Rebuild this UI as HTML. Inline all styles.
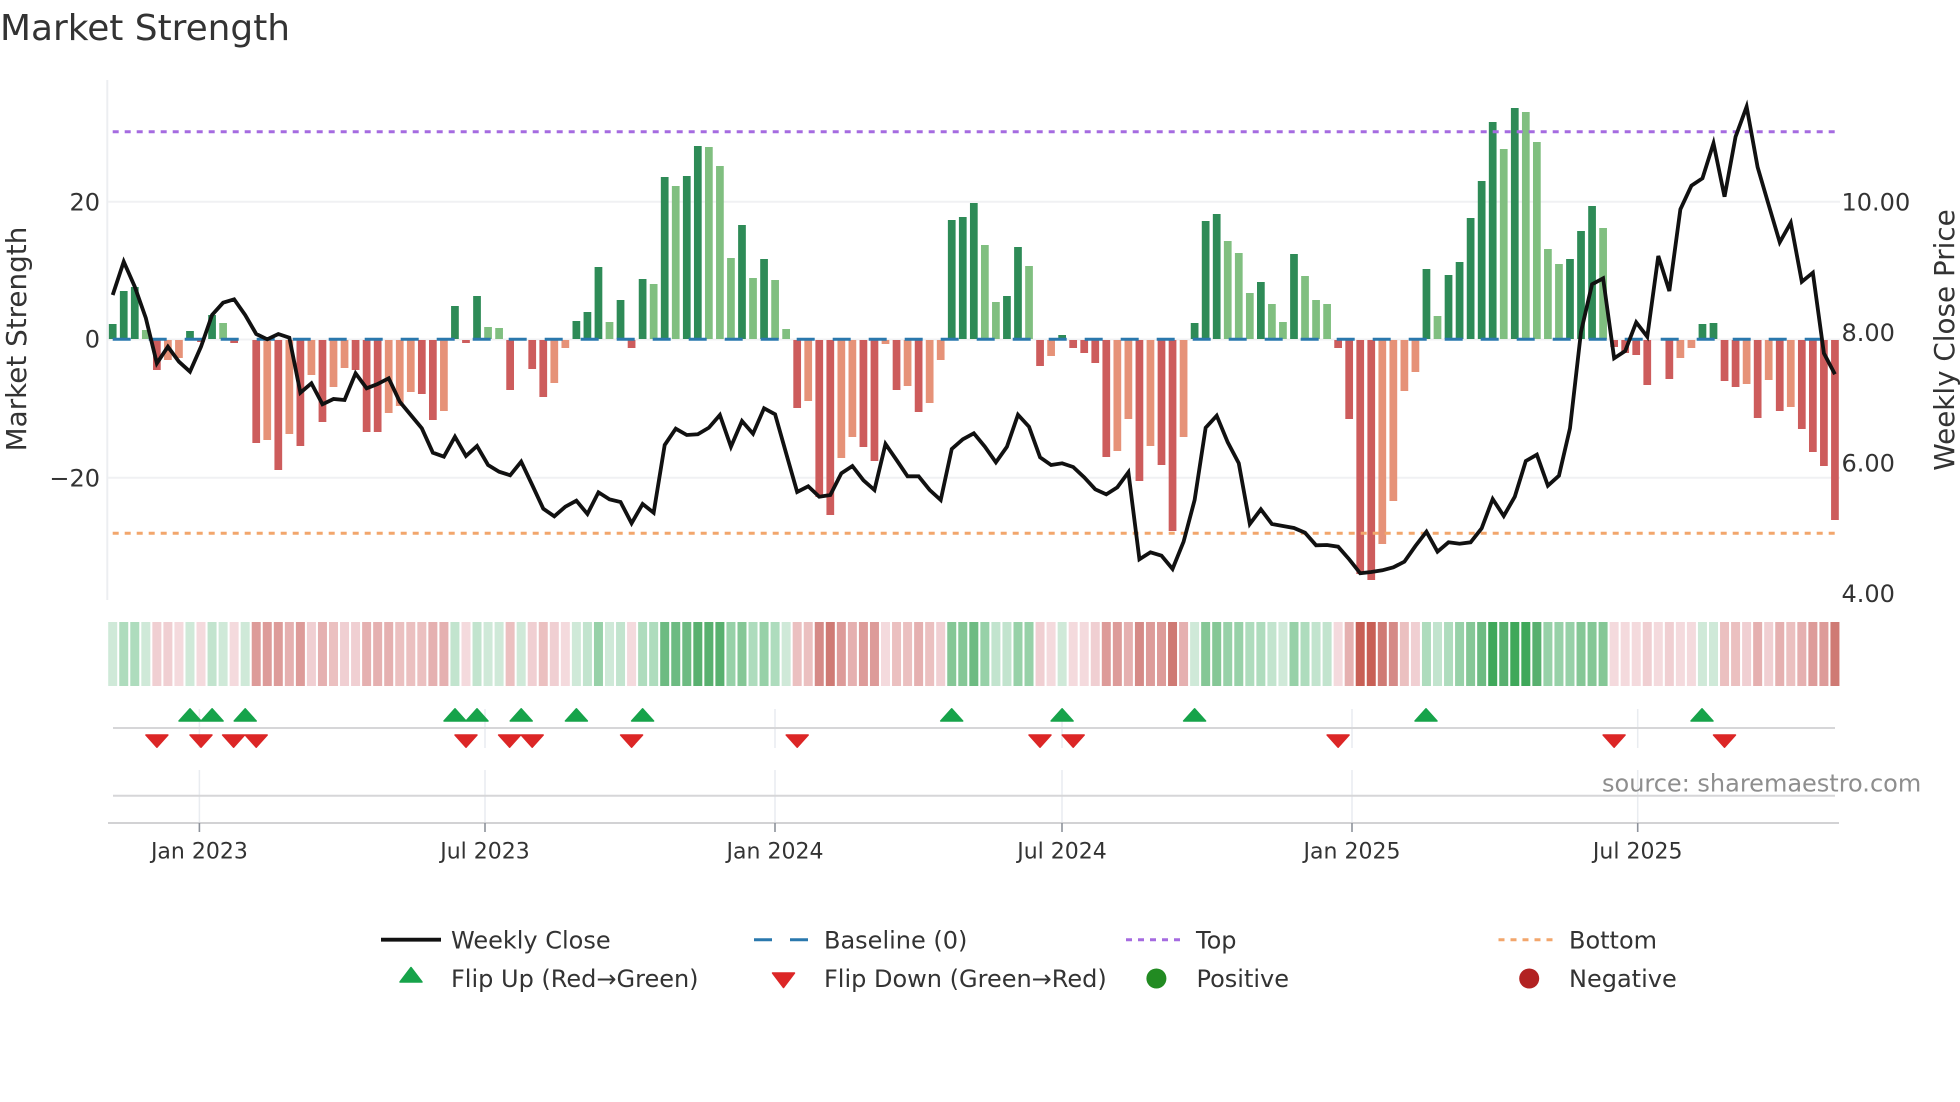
<!DOCTYPE html>
<html lang="en"><head><meta charset="utf-8"><title>Market Strength</title>
<style>
html,body{margin:0;padding:0;background:#fff;width:1960px;height:1102px;overflow:hidden}
svg{display:block}
text{font-family:"DejaVu Sans","Liberation Sans",sans-serif;fill:#333}
.t{font-size:24px}.x{font-size:22px}
.ns{vector-effect:non-scaling-stroke}
</style></head><body>
<svg width="1960" height="1102" viewBox="0 0 1960 1102" xmlns="http://www.w3.org/2000/svg">
<rect width="1960" height="1102" fill="#fff"/>
<text x="0" y="40" style="font-size:35.9px">Market Strength</text>

<!-- axis + grid -->
<path d="M107.3 80V600" stroke="#eceef1" stroke-width="2" fill="none"/>
<path d="M108 201.7H1840M108 339.5H1840M108 477.7H1840" stroke="#f0f1f3" stroke-width="2" fill="none"/>

<g transform="translate(112.7 0) scale(11.04 1)" fill="none">
<!-- bars -->
<path stroke="#2e8b57" stroke-width=".7" d="M0 339V324M1 339V291M2 339V287M7 339V331M9 339V315M31 339V306M33 339V296M42 339V321M43 339V312M44 339V267M46 339V300M48 339V279M50 339V177M52 339V176M53 339V146M57 339V225M59 339V259M76 339V220M77 339V217M78 339V203M81 339V296M82 339V247M86 339V335M98 339V323M99 339V221M100 339V214M104 339V282M107 339V254M119 339V269M121 339V275M122 339V262M123 339V218M124 339V181M125 339V122M127 339V108M132 339V259M133 339V231M134 339V206M144 339V324M145 339V323"/>
<path stroke="#80bf80" stroke-width=".7" d="M3 339V330M10 339V323M34 339V327M35 339V328M45 339V322M49 339V284M51 339V186M54 339V147M55 339V166M56 339V258M58 339V278M60 339V280M61 339V329M79 339V245M80 339V302M83 339V266M101 339V241M102 339V253M103 339V293M105 339V304M106 339V322M108 339V276M109 339V300M110 339V304M120 339V316M126 339V149M128 339V112M129 339V142M130 339V249M131 339V264M135 339V228"/>
<path stroke="#cd5c5c" stroke-width=".7" d="M4 340V370M8 340V342M11 340V343M13 340V443M15 340V470M17 340V446M19 340V422M22 340V370M23 340V432M24 340V432M28 340V394M29 340V420M32 340V343M36 340V390M38 340V369M39 340V397M47 340V348M62 340V408M64 340V497M65 340V515M68 340V447M69 340V461M71 340V390M73 340V412M84 340V366M87 340V348M88 340V353M89 340V363M90 340V457M93 340V481M95 340V465M96 340V531M111 340V348M112 340V419M113 340V574M114 340V580M136 340V347M137 340V353M138 340V355M139 340V385M141 340V379M146 340V381M147 340V387M149 340V418M151 340V411M153 340V429M154 340V452M155 340V466M156 340V520"/>
<path stroke="#e69278" stroke-width=".7" d="M5 340V360M6 340V358M14 340V440M16 340V434M18 340V375M20 340V387M21 340V368M25 340V413M26 340V406M27 340V392M30 340V411M40 340V383M41 340V348M63 340V401M66 340V458M67 340V437M70 340V344M72 340V386M74 340V403M75 340V360M85 340V356M91 340V451M92 340V419M94 340V446M97 340V437M115 340V544M116 340V501M117 340V391M118 340V372M142 340V358M143 340V348M148 340V384M150 340V380M152 340V407"/>
<!-- heat strip -->
<g stroke-width=".815">
<path stroke="#cfe9d8" d="M0 622V686M3 622V686M7 622V686M10 622V686M12 622V686M34 622V686M35 622V686M37 622V686M42 622V686M45 622V686M61 622V686M86 622V686M98 622V686M106 622V686M144 622V686M145 622V686"/>
<path stroke="#c2e4ce" d="M9 622V686M31 622V686M33 622V686M43 622V686M46 622V686M80 622V686M81 622V686M105 622V686M109 622V686M110 622V686M120 622V686"/>
<path stroke="#aedcbd" d="M1 622V686M2 622V686M48 622V686M49 622V686M58 622V686M60 622V686M103 622V686M104 622V686M108 622V686M119 622V686M121 622V686"/>
<path stroke="#97d1a8" d="M44 622V686M56 622V686M59 622V686M79 622V686M82 622V686M83 622V686M101 622V686M102 622V686M107 622V686M122 622V686M130 622V686M131 622V686M132 622V686"/>
<path stroke="#85c796" d="M57 622V686M76 622V686M77 622V686M99 622V686M100 622V686M123 622V686M133 622V686M134 622V686M135 622V686"/>
<path stroke="#6dbb82" d="M50 622V686M51 622V686M52 622V686M78 622V686M124 622V686"/>
<path stroke="#58b06f" d="M53 622V686M54 622V686M55 622V686M126 622V686M129 622V686"/>
<path stroke="#3fa85a" d="M125 622V686M127 622V686M128 622V686"/>
<path stroke="#f4dadd" d="M6 622V686M8 622V686M11 622V686M32 622V686M41 622V686M47 622V686M70 622V686M85 622V686M87 622V686M88 622V686M111 622V686M136 622V686M137 622V686M138 622V686M140 622V686M142 622V686M143 622V686"/>
<path stroke="#f0cfd2" d="M4 622V686M5 622V686M18 622V686M21 622V686M22 622V686M38 622V686M40 622V686M75 622V686M84 622V686M89 622V686M118 622V686M139 622V686M141 622V686M148 622V686M150 622V686"/>
<path stroke="#ebc0c0" d="M20 622V686M26 622V686M27 622V686M28 622V686M36 622V686M39 622V686M62 622V686M63 622V686M71 622V686M72 622V686M74 622V686M117 622V686M146 622V686M147 622V686M152 622V686"/>
<path stroke="#e5b0b0" d="M16 622V686M19 622V686M23 622V686M24 622V686M25 622V686M29 622V686M30 622V686M67 622V686M73 622V686M92 622V686M97 622V686M112 622V686M149 622V686M151 622V686M153 622V686"/>
<path stroke="#dd9b99" d="M13 622V686M14 622V686M15 622V686M17 622V686M66 622V686M68 622V686M69 622V686M90 622V686M91 622V686M94 622V686M95 622V686M154 622V686M155 622V686"/>
<path stroke="#d58a87" d="M64 622V686M93 622V686M116 622V686"/>
<path stroke="#cf7a74" d="M65 622V686M96 622V686M115 622V686M156 622V686"/>
<path stroke="#c85f55" d="M113 622V686M114 622V686"/>
</g>
</g>

<!-- threshold lines -->
<path d="M112.7 131.7H1835" stroke="#a56be0" stroke-width="3" stroke-dasharray="6 6" fill="none"/>
<path d="M112.7 533.3H1835" stroke="#f2a66c" stroke-width="3" stroke-dasharray="6 6" fill="none"/>
<path d="M112.7 339.3H1835" stroke="#2a78ad" stroke-width="3" stroke-dasharray="18 18" fill="none"/>

<!-- weekly close -->
<g transform="translate(112.7 0) scale(11.04 1)">
<polyline class="ns" fill="none" stroke="#111" stroke-width="3.8" stroke-linejoin="miter" points="0,295 1,261.7 2,286.7 3,318 4,363.3 5,346.7 6,361.7 7,371.7 8,346.7 9,315 10,302.7 11,299.3 12,315 13,334 14,339.3 15,334 16,337.7 17,392.7 18,383.3 19,404.3 20,399 21,400 22,373.3 23,388.3 24,384 25,378.3 26,401.7 27,415 28,428.3 29,452.7 30,456.7 31,436.7 32,456 33,446 34,465 35,471.7 36,475.3 37,461.7 38,485 39,508.7 40,516.3 41,506.7 42,500.7 43,514 44,492.3 45,499.3 46,502 47,523.3 48,504 49,512.7 50,445 51,428.7 52,435 53,434.3 54,427.7 55,415 56,446.7 57,421 58,433.7 59,408.3 60,414.3 61,453.3 62,492 63,486.3 64,496.7 65,495 66,473.3 67,466 68,480.3 69,490 70,444 71,460 72,476.3 73,476.3 74,490 75,500 76,449 77,439.3 78,433.3 79,446.7 80,462.3 81,446.7 82,414.7 83,426.7 84,457.3 85,465 86,463.3 87,467 88,477.3 89,489.3 90,494.3 91,487.3 92,472.3 93,559.3 94,552.3 95,555.7 96,569 97,541.7 98,500 99,427.7 100,415.7 101,442.3 102,463.3 103,524 104,509.3 105,524 106,526 107,528 108,532.7 109,545.3 110,545 111,546.7 112,559.3 113,573.3 114,572 115,570.3 116,567.3 117,561.7 118,546 119,531.7 120,551.7 121,542.3 122,543.7 123,542.3 124,528.3 125,499 126,516 127,496.7 128,461 129,454.7 130,485.7 131,475.7 132,428.3 133,331.7 134,284.3 135,278.3 136,358.3 137,351 138,322.3 139,336.7 140,256 141,291 142,209.3 143,185.7 144,178.3 145,143.3 146,196.7 147,136.7 148,106.7 149,167.3 150,205 151,242.3 152,222.7 153,281.7 154,272.7 155,353.3 156,374.3"/>
</g>

<!-- axis labels -->
<g class="t" text-anchor="end">
<text x="100" y="210.5" class="t">20</text>
<text x="100" y="347.7" class="t">0</text>
<text x="100" y="486.5" class="t">−20</text>
</g>
<g class="t">
<text x="1841.5" y="210.7" class="t">10.00</text>
<text x="1841.5" y="341.2" class="t">8.00</text>
<text x="1841.5" y="471.7" class="t">6.00</text>
<text x="1841.5" y="602" class="t">4.00</text>
</g>
<text transform="translate(26 339) rotate(-90)" text-anchor="middle" style="font-size:27.8px">Market Strength</text>
<text transform="translate(1954 340) rotate(-90)" text-anchor="middle" style="font-size:27.8px">Weekly Close Price</text>

<!-- lower panels -->
<path d="M199.4 709V748M199.4 770V823M485 709V748M485 770V823M775 709V748M775 770V823M1062 709V748M1062 770V823M1352 709V748M1352 770V823M1637.7 709V748M1637.7 770V823" stroke="#e9ecf0" stroke-width="1.5" fill="none"/>
<path d="M113 728H1835M113 795.8H1835" stroke="#d6d6d8" stroke-width="2" fill="none"/>
<path d="M108 823H1839" stroke="#d2d2d4" stroke-width="2" fill="none"/>
<path d="M199.4 823V832M485 823V832M775 823V832M1062 823V832M1352 823V832M1637.7 823V832" stroke="#8d929b" stroke-width="1.6" fill="none"/>

<path fill="#16a34a" stroke="#16a34a" stroke-width="1.5" stroke-linejoin="round" d="M179 721h22l-11-12.2zM201.1 721h22l-11-12.2zM234.2 721h22l-11-12.2zM444 721h22l-11-12.2zM466 721h22l-11-12.2zM510.2 721h22l-11-12.2zM565.4 721h22l-11-12.2zM631.6 721h22l-11-12.2zM940.7 721h22l-11-12.2zM1051.1 721h22l-11-12.2zM1183.6 721h22l-11-12.2zM1415 721h22l-11-12.2zM1691 721h22l-11-12.2z"/>
<path fill="#dc2626" stroke="#dc2626" stroke-width="1.5" stroke-linejoin="round" d="M145.9 735h22l-11 12.2zM190 735h22l-11 12.2zM222.6 735h22l-11 12.2zM245.2 735h22l-11 12.2zM455 735h22l-11 12.2zM498.6 735h22l-11 12.2zM521.2 735h22l-11 12.2zM620.6 735h22l-11 12.2zM786.2 735h22l-11 12.2zM1029 735h22l-11 12.2zM1062.2 735h22l-11 12.2zM1327.1 735h22l-11 12.2zM1603.1 735h22l-11 12.2zM1713.5 735h22l-11 12.2z"/>

<g class="x" text-anchor="middle">
<text x="199.4" y="858.3" class="x">Jan 2023</text>
<text x="485" y="858.3" class="x">Jul 2023</text>
<text x="775" y="858.3" class="x">Jan 2024</text>
<text x="1062" y="858.3" class="x">Jul 2024</text>
<text x="1352" y="858.3" class="x">Jan 2025</text>
<text x="1637.7" y="858.3" class="x">Jul 2025</text>
</g>

<text x="1602" y="791.5" class="t" style="fill:#8e8e8e">source: sharemaestro.com</text>

<!-- legend -->
<path d="M381 939.7H441" stroke="#111" stroke-width="3.8" fill="none"/>
<path d="M754 939.7H772M790 939.7H808" stroke="#2a78ad" stroke-width="3" fill="none"/>
<path d="M1126 939.7H1182" stroke="#a56be0" stroke-width="3" stroke-dasharray="6 6" fill="none"/>
<path d="M1498.5 939.7H1554" stroke="#f2a66c" stroke-width="3" stroke-dasharray="6 6" fill="none"/>
<path d="M400 982h22l-11-14.5z" fill="#16a34a" stroke="#16a34a" stroke-width="1.5" stroke-linejoin="round"/>
<path d="M772.5 973h22l-11 14.5z" fill="#dc2626" stroke="#dc2626" stroke-width="1.5" stroke-linejoin="round"/>
<circle cx="1156.4" cy="978.5" r="10" fill="#228b22"/>
<circle cx="1529.2" cy="978.5" r="10" fill="#b22222"/>
<text x="451" y="948.5" class="t">Weekly Close</text>
<text x="451" y="987" class="t">Flip Up (Red→Green)</text>
<text x="824" y="948.5" class="t">Baseline (0)</text>
<text x="824" y="987" class="t">Flip Down (Green→Red)</text>
<text x="1196" y="948.5" class="t">Top</text>
<text x="1196.5" y="987" class="t">Positive</text>
<text x="1569" y="948.5" class="t">Bottom</text>
<text x="1569" y="987" class="t">Negative</text>
</svg>
</body></html>
